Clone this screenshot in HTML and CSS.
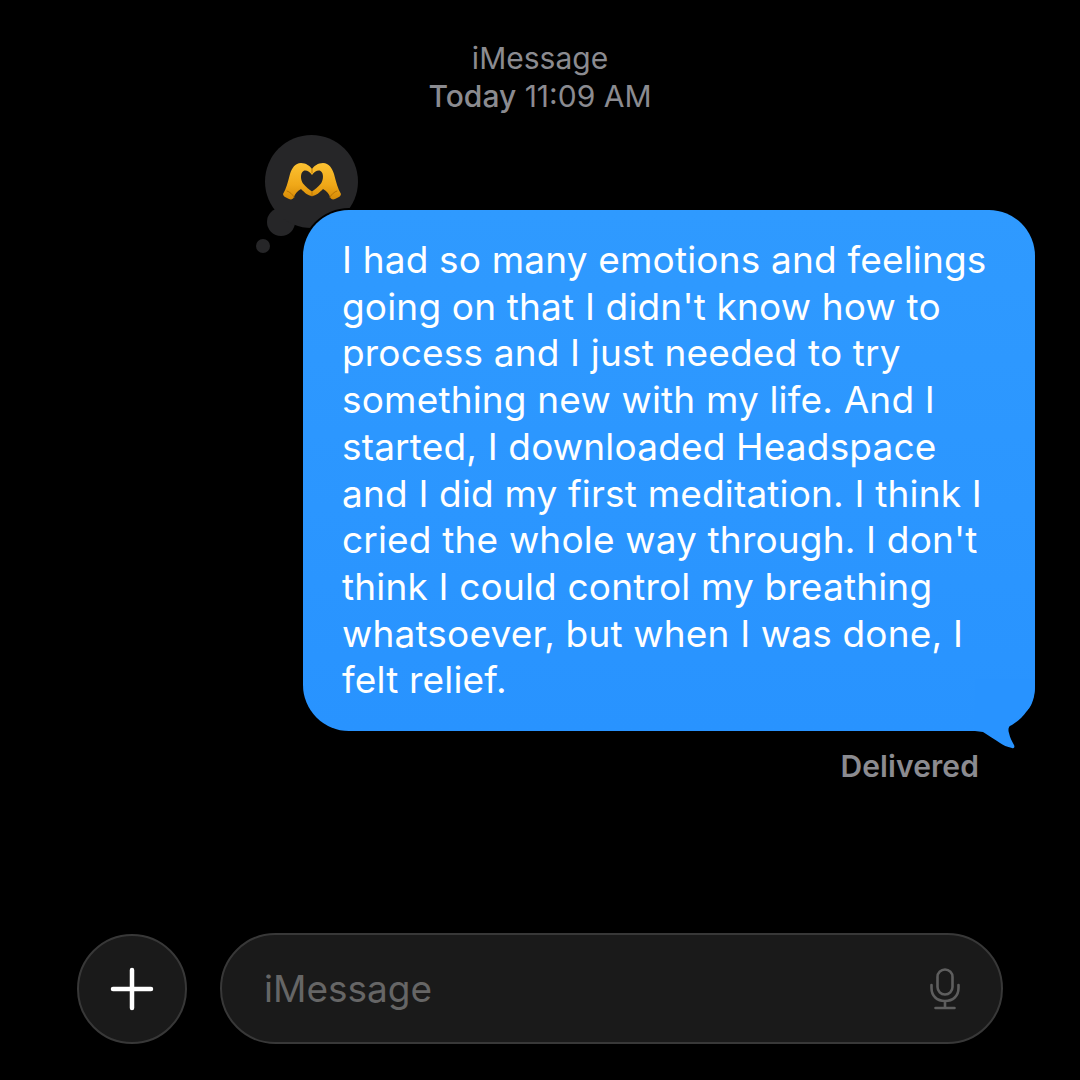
FILE: index.html
```html
<!DOCTYPE html>
<html lang="en">
<head>
    <meta charset="UTF-8">
    <title>iMessage</title>
    <link rel="stylesheet" href="styles.css">
</head>
<body>
    <div class="screen">
        <div class="thread-header">
            <div class="service">iMessage</div>
            <div class="stamp"><strong>Today</strong> 11:09 AM</div>
        </div>

        <div class="message">
            <div class="tapback">
                <span class="dot-small"></span>
                <span class="dot-mid"></span>
                <span class="dot-big">
                    <svg class="heart-hands" viewBox="0 0 58 38" width="58" height="38">
                        <defs>
                            <linearGradient id="skin" x1="0" y1="0" x2="0" y2="1">
                                <stop offset="0" stop-color="#fcc232"/>
                                <stop offset="0.6" stop-color="#f0a818"/>
                                <stop offset="1" stop-color="#d68a06"/>
                            </linearGradient>
                        </defs>
                        <path fill="url(#skin)" fill-rule="evenodd" d="M29 6 C27 3 23 0 18 0 C12 0 9 5 7 11 C5 19 3 26 0 31 C0 33 2 34 4 35 C7 37 10 37 11 34 C12 31 14 28 18 26 C21 29 25 33 29 33 C33 33 37 29 40 26 C44 28 46 31 47 34 C48 37 51 37 54 35 C56 34 58 33 58 31 C55 26 53 19 51 11 C49 5 46 0 40 0 C35 0 31 3 29 6 Z M29 12 C27 9 23 6.5 20.5 8 C17 10 17.5 17 20 20.5 C23 24 26.5 27 29 28.5 C31.5 27 35 24 38 20.5 C40.5 17 41 10 37.5 8 C35 6.5 31 9 29 12 Z"/>
                        <path d="M29 6 V10 M29 29 V33 M11 34 C9 31 7 29 4 28 M47 34 C49 31 51 29 54 28" fill="none" stroke="#b97504" stroke-width="1" stroke-linecap="round"/>
                    </svg>
                </span>
            </div>
            <div class="bubble">I had so many emotions and feelings<br>going on that I didn't know how to<br>process and I just needed to try<br>something new with my life. And I<br>started, I downloaded Headspace<br>and I did my first meditation. I think I<br>cried the whole way through. I don't<br>think I could control my breathing<br>whatsoever, but when I was done, I<br>felt relief.</div>
            <svg class="tail" viewBox="0 0 60 70" width="60" height="70">
                <path d="M60 0 C60 10 60 17 57 24 C54 33 43 38 37 44 C33 48 33 51 34 54 C35 59 37 62 39 66 C40 68 39 70 37 69 C32 68 28 66 25 64 C19 60 13 56 8 53 L0 52 L0 0 Z"/>
            </svg>
        </div>
        <div class="receipt">Delivered</div>

        <div class="composer">
            <div class="plus-btn">
                <svg viewBox="0 0 44 44" width="44" height="44">
                    <path d="M22 3 V41 M3 22 H41" stroke="#fff" stroke-width="4.5" stroke-linecap="round" fill="none"/>
                </svg>
            </div>
            <div class="input">
                <span class="placeholder">iMessage</span>
                <svg class="mic" viewBox="0 0 30 42" width="30" height="42">
                    <rect x="7.5" y="1.5" width="15" height="25" rx="7.5" fill="none" stroke="#5e5e5e" stroke-width="2.6"/>
                    <path d="M1.5 17 V20 C1.5 28 7 33 15 33 C23 33 28.5 28 28.5 20 V17 M15 33 V40 M5.5 40 H24.5" fill="none" stroke="#5e5e5e" stroke-width="2.6" stroke-linecap="round"/>
                </svg>
            </div>
        </div>
    </div>
</body>
</html>
```
FILE: styles.css
```css
* {
    box-sizing: border-box;
}
body {
    margin: 0;
    background: #000;
    font-family: Inter, 'Liberation Sans', sans-serif;
}
.screen {
    width: 1080px;
    height: 1080px;
    overflow: hidden;
    display: flex;
    flex-direction: column;
    padding-top: 39px;
}
.thread-header {
    text-align: center;
    color: #8b8b90;
    font-size: 30px;
    line-height: 38px;
}
.stamp strong {
    font-weight: 500;
}
.message {
    position: relative;
    margin: 95px 45px 0 303px;
}
.bubble {
    position: relative;
    height: 521px;
    padding: 27px 20px 0 39px;
    border-radius: 46px;
    background: linear-gradient(#2f9aff, #2893ff);
    box-shadow: 0 0 0 2px #000;
    color: #fff;
    font-size: 37px;
    letter-spacing: 0.17px;
    line-height: 46.7px;
    white-space: nowrap;
}
.tail {
    position: absolute;
    right: 0;
    bottom: -18px;
    fill: #2893ff;
}
.tapback span {
    position: absolute;
    border-radius: 50%;
    background: #262628;
}
.dot-big {
    left: -38px;
    top: -75px;
    width: 93px;
    height: 93px;
    display: flex;
    align-items: center;
    justify-content: center;
}
.dot-mid {
    left: -36px;
    top: -2px;
    width: 28px;
    height: 28px;
}
.dot-small {
    left: -47px;
    top: 29px;
    width: 14px;
    height: 14px;
}
.receipt {
    margin: 17px 101px 0 0;
    text-align: right;
    color: #8b8b90;
    font-size: 30px;
    font-weight: 600;
    letter-spacing: 0.1px;
    line-height: 36px;
}
.composer {
    margin: auto 77px 36px 77px;
    display: flex;
    gap: 33px;
}
.plus-btn {
    flex: none;
    width: 110px;
    height: 110px;
    margin-top: 1px;
    border-radius: 50%;
    background: #1a1a1a;
    border: 2px solid #383838;
    display: flex;
    align-items: center;
    justify-content: center;
}
.input {
    flex: 1;
    height: 111px;
    border-radius: 56px;
    background: #1a1a1a;
    border: 2px solid #383838;
    display: flex;
    align-items: center;
    justify-content: space-between;
    padding: 0 41px 0 42px;
}
.placeholder {
    color: #666;
    font-size: 37px;
}
```
